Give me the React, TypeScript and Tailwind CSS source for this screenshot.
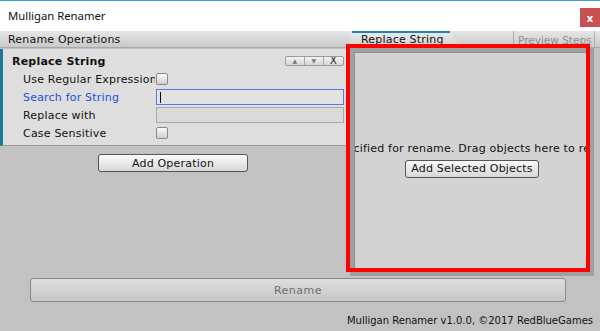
import React from "react";

function Checkbox() {
  return (
    <div className="w-[12px] h-[12px] rounded-[2px] border border-[#8a8a8a] bg-gradient-to-b from-[#fbfbfb] to-[#cfcfcf]" />
  );
}

function Row({ label, blue, children }: { label: string; blue?: boolean; children: React.ReactNode }) {
  return (
    <div className="flex items-center h-[18px]">
      <div className={`w-[132px] overflow-hidden whitespace-nowrap ${blue ? "text-[#1d4fd8]" : "text-[#111]"}`}>{label}</div>
      <div className="flex-1 flex items-center pl-px">{children}</div>
    </div>
  );
}

export default function App() {
  return (
    <div className="relative w-[600px] h-[331px] overflow-hidden bg-[#c2c2c2] font-['DejaVu_Sans',sans-serif] text-[11px] tracking-[0.2px] leading-none text-[#111]">
      {/* window top border */}
      <div className="h-px bg-[#3c9fe0]" />
      {/* title bar */}
      <div className="h-[30px] bg-white flex items-center justify-between">
        <span className="pl-2 font-['Noto_Sans',sans-serif] text-[11.3px] tracking-normal text-[#111]">Mulligan Renamer</span>
        <div className="self-start mt-[7px] w-[20px] h-[19px] bg-[#c75050] flex items-center justify-center text-white font-['Noto_Sans',sans-serif] text-[11px] font-bold">x</div>
      </div>
      {/* toolbar */}
      <div className="relative h-[17px] flex items-end bg-gradient-to-b from-[#e6e6e6] to-[#c9c9c9] border-b border-[#a8a8a8]">
        <span className="pl-2 pb-[2px]">Rename Operations</span>
        <div className="ml-auto flex items-stretch h-full">
          <div className="relative w-[110px] h-full mr-[53px] [clip-path:polygon(0_0,100px_0,110px_100%,0_100%)] bg-gradient-to-b from-[#ececec] to-[#d2d2d2]">
            <div className="absolute left-[2px] right-[10px] top-0 h-[2px] bg-[#1f86b0]" />
            <span className="absolute left-[11px] bottom-[2px] whitespace-nowrap">Replace String</span>
          </div>
          <div className="w-[82px] h-full border-x border-[#b0b0b0] flex items-end pl-[4px] pb-[2px] text-[#8f8f8f] text-[10.5px] tracking-normal mr-[5px] whitespace-nowrap">Preview Steps</div>
        </div>
      </div>

      {/* content */}
      <div className="flex h-[228px]">
        <div className="w-[346px] pt-px flex flex-col">
          <div className="bg-[#dedede] border-l-[3px] border-[#1b7a9c] border-b border-b-[#9a9a9a] pl-[9px] pr-[2px] pt-[3px] pb-[3px]">
            <div className="flex items-center h-[18px]">
              <span className="font-bold text-[11px]">Replace String</span>
              <div className="ml-auto flex h-[10px] rounded-[2px] border border-[#9a9a9a] bg-gradient-to-b from-[#f4f4f4] to-[#d6d6d6] overflow-hidden">
                <div className="w-[19px] flex items-center justify-center text-[6px] text-[#777] border-r border-[#a8a8a8]">▲</div>
                <div className="w-[19px] flex items-center justify-center text-[6px] text-[#777] border-r border-[#a8a8a8]">▼</div>
                <div className="w-[19px] flex items-center justify-center text-[10px] text-[#222]">X</div>
              </div>
            </div>
            <div className="pl-[11px]">
              <Row label="Use Regular Expression">
                <Checkbox />
              </Row>
              <Row label="Search for String" blue>
                <div className="w-full h-[16px] border border-[#5a78e0] bg-[#e2e2e2] flex items-center pl-[3px]">
                  <div className="w-px h-[11px] bg-black" />
                </div>
              </Row>
              <Row label="Replace with">
                <div className="w-full h-[16px] border border-[#a9a9a9] bg-[#dadada]" />
              </Row>
              <Row label="Case Sensitive">
                <Checkbox />
              </Row>
            </div>
          </div>
          <div className="flex justify-center mt-[8px]">
            <div className="w-[150px] h-[18px] rounded-[3px] border border-[#555] bg-gradient-to-b from-[#fafafa] to-[#d8d8d8] flex items-center justify-center">Add Operation</div>
          </div>
        </div>
        <div className="ml-[4px] w-[244px] h-full border-[4px] border-[#a0a0a0] bg-[#8f8f8f] p-px">
          <div className="w-full h-full bg-[#d3d3d3] flex flex-col items-center justify-center overflow-hidden pb-[4px]">
            <div className="w-full overflow-hidden flex justify-center whitespace-nowrap mb-[6px]">
              <span className="shrink-0">No objects specified for rename. Drag objects here to rename them, or</span>
            </div>
            <div className="w-[134px] h-[18px] rounded-[3px] border border-[#555] bg-gradient-to-b from-[#fafafa] to-[#d8d8d8] flex items-center justify-center whitespace-nowrap">Add Selected Objects</div>
          </div>
        </div>
      </div>

      {/* rename button */}
      <div className="pl-[30px] mt-[2px]">
        <div className="w-[536px] h-[24px] rounded-[3px] border border-[#8a8a8a] bg-gradient-to-b from-[#dedede] to-[#c6c6c6] flex items-center justify-center text-[#6e6e6e] tracking-[0.5px]">Rename</div>
      </div>

      {/* footer */}
      <div className="flex justify-end pr-[7px] mt-[14px]">
        <span className="text-[10px] tracking-normal whitespace-nowrap">Mulligan Renamer v1.0.0, ©2017 RedBlueGames</span>
      </div>

      {/* red annotation */}
      <div className="absolute left-[346px] top-[44px] w-[244px] h-[228px] border-[4px] border-[#ff0000]" />
    </div>
  );
}
